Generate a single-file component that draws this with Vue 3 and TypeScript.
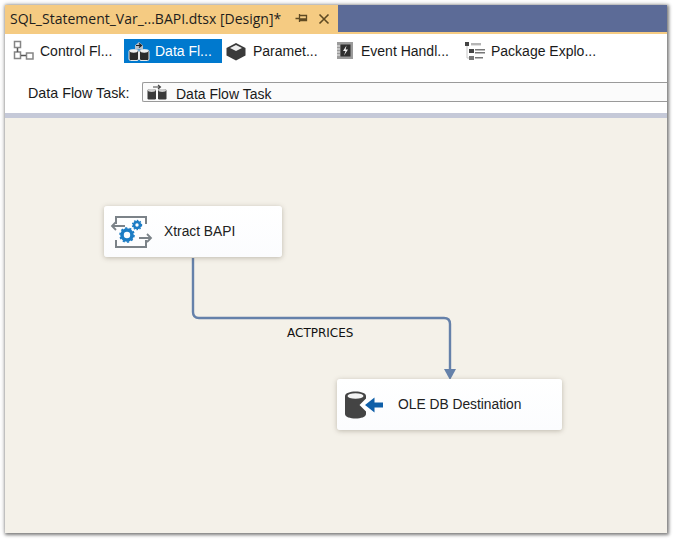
<script setup lang="ts">
const tabs = [
  { key: 'control', label: 'Control Fl...', width: 115 },
  { key: 'data', label: 'Data Fl...', width: 98 },
  { key: 'param', label: 'Paramet...', width: 108 },
  { key: 'event', label: 'Event Handl...', width: 130 },
  { key: 'package', label: 'Package Explo...', width: 140 }
];
const activeTab = 'data';
</script>

<template>
  <div class="page">
    <div class="window">
      <div class="title-strip">
        <div class="doc-tab">
          <span class="doc-name">SQL_Statement_Var_...BAPI.dtsx [Design]*</span>
          <svg class="pin" width="13" height="13" viewBox="0 0 13 13">
            <path d="M4.500 2v8M4.500 3.500h7v5h-7M0.500 6.500h4M4.500 7h7" fill="none" stroke="#5f4a22" stroke-width="1.300" />
          </svg>
          <svg class="close" width="12" height="12" viewBox="0 0 12 12">
            <path d="M1.500 1.500l9 9M10.500 1.500l-9 9" fill="none" stroke="#5f4a22" stroke-width="1.600" />
          </svg>
        </div>
      </div>

      <div class="toolbar">
        <div class="tabs">
          <div
            v-for="tab in tabs"
            :key="tab.key"
            class="tab"
            :class="{ active: tab.key === activeTab }"
            :style="{ width: tab.width + 'px' }"
          >
            <svg class="tab-icon" width="22" height="22" viewBox="0 0 22 22">
              <g v-if="tab.key === 'control'" fill="#fff" stroke="#858585" stroke-width="1.500">
                <rect x="1.500" y="1.500" width="6" height="6" />
                <rect x="1.500" y="12" width="6" height="6.500" />
                <rect x="13.500" y="13" width="6.500" height="6" />
                <path d="M4.500 8v4M8 15.500h5" fill="none" stroke="#555" />
              </g>
              <g v-else-if="tab.key === 'data'">
                <path d="M7 5.500L11 2l4 3.500v4H7z" fill="#b9c2cc" />
                <path d="M8 5.500h5M11 3.500l2.500 2-2.500 2" fill="none" stroke="#222" stroke-width="1.200" />
                <rect x="1" y="10" width="9.500" height="10.500" rx="1.500" fill="#2b2b2b" stroke="#e8e8e8" />
                <rect x="11.500" y="10" width="9.500" height="10.500" rx="1.500" fill="#2b2b2b" stroke="#e8e8e8" />
                <ellipse cx="5.700" cy="11" rx="4" ry="1.700" fill="#f0f0f0" />
                <ellipse cx="16.200" cy="11" rx="4" ry="1.700" fill="#f0f0f0" />
              </g>
              <g v-else-if="tab.key === 'param'">
                <path d="M0.500 8L10 3l9.500 5v7.500L10 20.500 0.500 15.500z" fill="#3a3a3a" />
                <path d="M4 8l6-3 6 3-6 3z" fill="#ececec" />
              </g>
              <g v-else-if="tab.key === 'event'">
                <rect x="3" y="2" width="16" height="17" fill="#9b9b9b" />
                <rect x="6.500" y="4.500" width="10" height="12" fill="#2f2f2f" />
                <path d="M12.500 5.500L9 11h2.500L10 15.500 14 9.500h-2.400z" fill="#f2f2f2" />
                <path d="M3 6h3M3 9h3M3 12h3M3 15h3" stroke="#eee" />
              </g>
              <g v-else>
                <rect x="1" y="2" width="4" height="4" fill="#444" />
                <rect x="7" y="3" width="10" height="2.400" fill="#b5b5b5" />
                <rect x="5" y="9" width="5" height="4" fill="#444" />
                <rect x="11" y="9" width="10" height="1.500" fill="#777" />
                <rect x="11" y="12" width="10" height="1.500" fill="#777" />
                <rect x="5" y="16" width="5" height="4" fill="#777" />
                <rect x="11" y="17" width="8" height="1.500" fill="#777" />
                <path d="M3 6v12h2" fill="none" stroke="#c5c5c5" />
              </g>
            </svg>
            <span>{{ tab.label }}</span>
          </div>
        </div>

        <div class="task-row">
          <label class="task-label">Data Flow Task:</label>
          <div class="task-box">
            <svg class="task-icon" width="20" height="16" viewBox="0 0 20 16">
              <path d="M6 3h7M11 1l2.500 2-2.500 2" fill="none" stroke="#444" stroke-width="1.100" />
              <rect x="0.500" y="5.500" width="8.500" height="10" rx="1.200" fill="#3a3a3a" />
              <rect x="11" y="5.500" width="8.500" height="10" rx="1.200" fill="#3a3a3a" />
              <ellipse cx="4.700" cy="6.500" rx="3.800" ry="1.400" fill="#cfcfcf" />
              <ellipse cx="15.200" cy="6.500" rx="3.800" ry="1.400" fill="#cfcfcf" />
            </svg>
            <span class="task-value">Data Flow Task</span>
          </div>
        </div>
      </div>

      <div class="divider"></div>

      <div class="canvas">
        <svg class="connector" width="662" height="415" viewBox="0 0 662 415">
          <path d="M188 140V194Q188 200 194 200H439Q445 200 445 206V252" fill="none" stroke="#6581aa" stroke-width="2.400" />
          <path d="M439 251H451L445 262z" fill="#6581aa" />
        </svg>

        <div class="node source">
          <svg width="44" height="34" viewBox="0 0 44 34">
            <path d="M7 9V2h30v7M7 25v7h30v-7" fill="none" stroke="#7b8288" stroke-width="2" />
            <path d="M16 11H3M7 7l-4 4 4 4M30 23h12M38 19l4 4-4 4" fill="none" stroke="#7b8288" stroke-width="1.800" />
            <circle cx="18" cy="20" r="5" fill="none" stroke="#1c7cc4" stroke-width="3.600" />
            <circle cx="18" cy="20" r="7" fill="none" stroke="#1c7cc4" stroke-width="1.600" stroke-dasharray="2.200 2.200" />
            <circle cx="28" cy="10" r="3" fill="none" stroke="#1c7cc4" stroke-width="2.600" />
            <circle cx="28" cy="10" r="4.600" fill="none" stroke="#1c7cc4" stroke-width="1.200" stroke-dasharray="1.500 1.500" />
          </svg>
          <span>Xtract BAPI</span>
        </div>

        <div class="node dest">
          <svg width="40" height="30" viewBox="0 0 40 30">
            <path d="M0 6C0 0 21 0 21 6V24C21 30 0 30 0 24z" fill="#444" />
            <ellipse cx="10.500" cy="6" rx="8" ry="2.800" fill="#f4f4f4" />
            <path d="M22 7.500L14.500 15 22 22.500z" fill="#fff" />
            <path d="M38 12.500H29.500V7.500L20 15l9.500 7.500v-5H38z" fill="#0f5fa8" />
          </svg>
          <span>OLE DB Destination</span>
        </div>

        <span class="path-label">ACTPRICES</span>
      </div>
    </div>
  </div>
</template>

<style scoped>
.page {
  width: 676px;
  height: 542px;
  padding: 5px 9px 9px 5px;
  box-sizing: border-box;
  background: #fff;
  overflow: hidden;
}

.window {
  height: 100%;
  display: flex;
  flex-direction: column;
  background: #fff;
  box-shadow: 1px 1px 3px 1px rgba(0, 0, 0, 0.45), 0 0 6px rgba(0, 0, 0, 0.2);
  font-family: "Liberation Sans", Arial, sans-serif;
}

.title-strip {
  height: 29px;
  flex: none;
  box-sizing: border-box;
  background: #5c6b97;
  border-bottom: 2px solid #f5cb82;
}

.doc-tab {
  width: 333px;
  height: 29px;
  display: flex;
  align-items: center;
  padding: 0 8px 2px 5px;
  box-sizing: border-box;
  background: #f5cb82;
  color: #1d1d1d;
  font-family: "Open Sans", "Liberation Sans", sans-serif;
  font-size: 14px;
}

.doc-name {
  flex: 1;
  white-space: nowrap;
}

.pin {
  margin-right: 10px;
}

.toolbar {
  height: 79px;
  flex: none;
  display: flex;
  flex-direction: column;
}

.tabs {
  display: flex;
  padding: 5px 0 0 4px;
}

.tab {
  height: 24px;
  display: flex;
  align-items: center;
  gap: 5px;
  flex: none;
  padding-left: 4px;
  box-sizing: border-box;
  font-size: 14px;
  color: #1a1a1a;
  white-space: nowrap;
}

.tab-icon {
  flex: none;
}

.tab.active {
  background: #0079ce;
  color: #fff;
}

.task-row {
  display: flex;
  align-items: center;
  padding: 19px 0 0 23px;
}

.task-label {
  width: 114px;
  flex: none;
  padding-top: 2px;
  font-size: 14.3px;
  color: #1a1a1a;
}

.task-box {
  flex: 1;
  height: 20px;
  display: flex;
  align-items: center;
  box-sizing: border-box;
  padding-left: 4px;
  background: #fbfbfb;
  border: 1px solid #9a9a9a;
  border-right: none;
  border-radius: 2px 0 0 2px;
  font-size: 14px;
  color: #1a1a1a;
}

.task-value {
  margin-left: 9px;
  padding-top: 3px;
}

.divider {
  height: 5px;
  flex: none;
  background: #c5c9d8;
}

.canvas {
  flex: 1;
  position: relative;
  background: #f4f1e9;
}

.connector {
  position: absolute;
  left: 0;
  top: 0;
}

.node {
  position: absolute;
  display: flex;
  align-items: center;
  height: 51px;
  box-sizing: border-box;
  background: linear-gradient(#fff, #fbfcfe);
  border-radius: 3px;
  box-shadow: 0 1px 5px rgba(90, 80, 60, 0.35);
  font-size: 13.8px;
  color: #222;
  white-space: nowrap;
}

.source {
  left: 99px;
  top: 88px;
  width: 178px;
  padding-left: 5px;
  gap: 11px;
}

.dest {
  left: 332px;
  top: 261px;
  width: 225px;
  padding-left: 8px;
  gap: 13px;
}

.path-label {
  position: absolute;
  left: 282px;
  top: 208px;
  font-family: "DejaVu Sans", "Liberation Sans", sans-serif;
  font-size: 12px;
  color: #111;
}
</style>
